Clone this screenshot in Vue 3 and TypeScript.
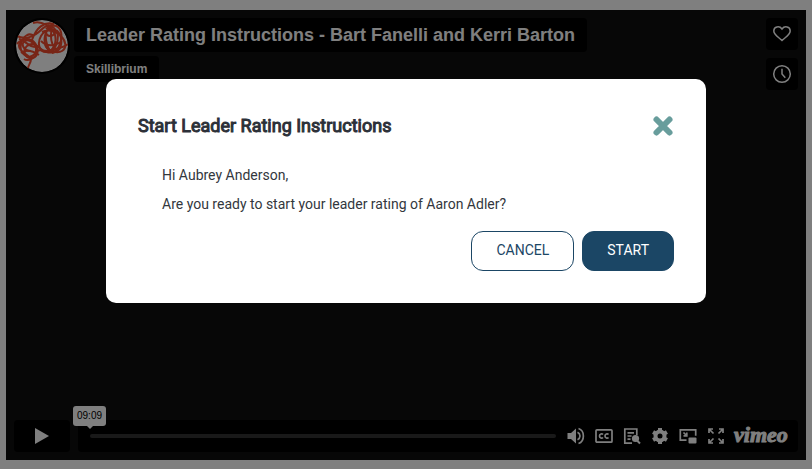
<script setup lang="ts">
import { ref } from 'vue'

const open = ref<boolean>(true)
const playing = ref<boolean>(false)
const position = ref<number>(0)
const title = 'Leader Rating Instructions - Bart Fanelli and Kerri Barton'
const member = 'Aubrey Anderson'
const leader = 'Aaron Adler'
</script>

<template>
  <main class="page">
    <section class="player" aria-label="Video player">
      <header class="top">
        <a class="avatar" href="#" aria-label="Skillibrium profile">
          <svg viewBox="0 0 52 52" width="52" height="52">
            <defs>
              <clipPath id="disc"><circle cx="26" cy="26" r="26" /></clipPath>
            </defs>
            <g clip-path="url(#disc)">
              <circle cx="26" cy="26" r="26" fill="#fff" />
              <g class="scribble">
                <path d="M11 52c0-6 4-8 4-13-3-5-12-7-12-13s8-9 13-5 6 12 0 15-13-4-11-12 8-12 13-8" />
                <path d="M1 24c4-6 14-6 18-1s4 14-3 15-10-8-5-12 10-1 14 3 8 4 14 3" />
                <path d="M17 3c8-3 20 4 22 12s-2 17-9 17-9-9-5-16 14-9 18-3 3 18-4 19-12-8-10-16 8-13 15-9" />
                <path d="M16 20C20 8 28 1 38 4M1 16c8 4 17 1 24-6s18-6 20 2-3 20-9 21M26 12c6-3 14-1 19 4s6 12 1 15-14 0-17-6" />
                <path d="M8 39c4 3 12-1 13-7S14 18 9 21s-1 10 6 10M30 9c4-4 10-2 9 3s-8 5-9 1" />
                <path d="M20 31c7-3 12 3 18-1s9-1 14-6M30 12c-1 8 1 15 5 20M36 8c-2 8-1 16 4 22" />
                <path d="M3 19c6 1 9 8 17 8M5 33c5-4 12-2 18 2M41 10c2 8 1 14-4 20M25 21c6 6 14 5 20 1" />
              </g>
            </g>
          </svg>
        </a>
        <div class="titles">
          <h1><a href="#">{{ title }}</a></h1>
          <a class="owner" href="#">Skillibrium</a>
        </div>
        <div class="actions">
          <button type="button" aria-label="Like">
            <svg viewBox="0 0 20 20" width="20" height="20">
              <path class="line" d="M10 16.500C7 13.500 1.800 10.800 1.800 7c0-4.500 5.700-5.500 8.200-2 2.500-3.500 8.200-2.500 8.200 2 0 3.800-5.200 6.500-8.200 9.500Z" />
            </svg>
          </button>
          <button type="button" aria-label="Watch later">
            <svg viewBox="0 0 20 20" width="20" height="20">
              <circle class="line" cx="10" cy="10" r="8.300" />
              <path class="line" d="M10 4.800V10l3.300 3.800" />
            </svg>
          </button>
        </div>
      </header>

      <footer class="controls">
        <button class="play" type="button" aria-label="Play" @click="playing = !playing">
          <svg viewBox="0 0 16 16" width="16" height="16"><path fill="currentColor" d="M1 0l14 8-14 8Z" /></svg>
        </button>
        <div class="bar">
          <output class="time">09:09</output>
          <input v-model.number="position" type="range" min="0" max="549" aria-label="Seek" />
          <div class="tools">
            <button type="button" aria-label="Volume">
              <svg viewBox="0 0 20 20" width="20" height="20">
                <path fill="currentColor" d="M1.500 7H5l5-4.500v15L5 13H1.500Z" />
                <path class="line" d="M11.500 6.300c3.300 1.700 3.300 5.700 0 7.400M12.500 2.500c6.500 2 6.500 13 0 15" />
              </svg>
            </button>
            <button type="button" aria-label="Captions">
              <svg viewBox="0 0 20 20" width="20" height="20">
                <rect class="line" x="2" y="3.800" width="16" height="12.400" rx="1" />
                <path class="line" d="M9 8.500c-1-1.200-3.500-.8-3.500 1.500s2.500 2.700 3.500 1.500M14.500 8.500c-1-1.200-3.500-.8-3.500 1.500s2.500 2.700 3.500 1.500" />
              </svg>
            </button>
            <button type="button" aria-label="Transcript">
              <svg viewBox="0 0 20 20" width="20" height="20">
                <path class="line" d="M10 17.200H2.800V3h12v6M5.500 6.800h6.500M5.500 10h4M5.500 13.200h3" />
                <circle cx="13.500" cy="12.500" r="3.600" fill="currentColor" />
                <path class="thick" d="M15 14.500l3 3" />
              </svg>
            </button>
            <button type="button" aria-label="Settings">
              <svg viewBox="0 0 20 20" width="20" height="20">
                <circle cx="10" cy="10" r="4.500" fill="none" stroke="currentColor" stroke-width="4" />
                <path class="teeth" d="M10 2v3M10 15v3M3.070 6l2.600 1.500M14.330 12.500l2.600 1.500M3.070 14l2.600-1.500M14.330 7.500l2.600-1.500" />
              </svg>
            </button>
            <button type="button" aria-label="Picture in picture">
              <svg viewBox="0 0 20 20" width="20" height="20">
                <path class="line" d="M8.500 14.200H2.300V3.800h15.400v6M5.500 6.500l3 3M8.800 6.500v3.300H5.500" />
                <rect x="10.500" y="11.500" width="8" height="6" rx="1" fill="currentColor" />
              </svg>
            </button>
            <button type="button" aria-label="Fullscreen">
              <svg viewBox="0 0 20 20" width="20" height="20">
                <path class="line" d="M3 7V3h4M13 3h4v4M17 13v4h-4M7 17H3v-4M3 3l4.500 4.500M17 3l-4.500 4.500M17 17l-4.500-4.500M3 17l4.500-4.500" />
              </svg>
            </button>
            <a class="brand" href="#">vimeo</a>
          </div>
        </div>
      </footer>
    </section>

    <div v-if="open" class="overlay">
      <section class="dialog" role="dialog" aria-modal="true" aria-labelledby="dialog-title">
        <header class="dialog-head">
          <h2 id="dialog-title">Start Leader Rating Instructions</h2>
          <button class="close" type="button" aria-label="Close" @click="open = false">
            <svg viewBox="0 0 22 22" width="22" height="22"><path d="M4.500 4.500l13 13M17.500 4.500l-13 13" /></svg>
          </button>
        </header>
        <div class="dialog-body">
          <p>Hi {{ member }},</p>
          <p>Are you ready to start your leader rating of {{ leader }}?</p>
        </div>
        <footer class="dialog-actions">
          <button class="cancel" type="button" @click="open = false">CANCEL</button>
          <button class="start" type="button" @click="open = false">START</button>
        </footer>
      </section>
    </div>
  </main>
</template>

<style>
body {
  margin: 0;
  background: #fff;
}
</style>

<style scoped>
* {
  box-sizing: border-box;
}
button {
  display: flex;
  align-items: center;
  justify-content: center;
  padding: 0;
  border: 0;
  background: none;
  color: inherit;
  cursor: pointer;
}
a {
  color: inherit;
  text-decoration: none;
}
svg {
  display: block;
}
.page {
  padding: 10px 6px;
}
.player {
  display: flex;
  flex-direction: column;
  justify-content: space-between;
  aspect-ratio: 16 / 9;
  padding: 8px;
  background: #0e0e0e;
  color: #fff;
  font-family: "Liberation Sans", Arial, sans-serif;
}
.top {
  display: flex;
  align-items: flex-start;
}
.avatar {
  margin: 2px 6px 0 2px;
  border-radius: 50%;
  box-shadow: 0 0 0 2px #000;
}
.scribble {
  fill: none;
  stroke: #f04a2c;
  stroke-width: 2;
}
.titles {
  display: flex;
  flex: 1;
  flex-direction: column;
  align-items: flex-start;
  gap: 4px;
}
h1,
.owner {
  margin: 0;
  padding: 0 12px;
  border-radius: 4px;
  background: #000;
  font-weight: 700;
}
h1 {
  font-size: 18px;
  line-height: 34px;
}
.owner {
  font-size: 12px;
  line-height: 26px;
}
.actions {
  display: flex;
  flex-direction: column;
  gap: 8px;
}
.actions button {
  width: 32px;
  height: 32px;
  border-radius: 4px;
  background: #000;
}
.line {
  fill: none;
  stroke: currentColor;
  stroke-width: 1.5;
}
.tools .line {
  stroke-width: 1.7;
}
.thick {
  stroke: currentColor;
  stroke-width: 2;
}
.teeth {
  fill: none;
  stroke: currentColor;
  stroke-width: 4;
}
.controls {
  display: flex;
  gap: 8px;
}
.play {
  width: 56px;
  height: 32px;
  border-radius: 4px;
  background: #000;
}
.bar {
  position: relative;
  display: flex;
  flex: 1;
  align-items: center;
  gap: 10px;
  height: 32px;
  padding: 0 8px 0 12px;
  border-radius: 4px;
  background: #000;
}
.time {
  position: absolute;
  bottom: 26px;
  left: -5px;
  padding: 0 4px;
  border-radius: 3px;
  background: #fff;
  color: #000;
  font-size: 10px;
  line-height: 20px;
}
.time::after {
  position: absolute;
  top: 20px;
  left: 14px;
  border: 3px solid transparent;
  border-top-color: #fff;
  border-bottom: 0;
  content: "";
}
input {
  flex: 1;
  min-width: 0;
  height: 4px;
  margin: 0;
  border-radius: 2px;
  background: #333;
  appearance: none;
}
input::-webkit-slider-thumb {
  width: 1px;
  height: 4px;
  appearance: none;
}
.tools {
  display: flex;
  align-items: center;
  gap: 8px;
}
.brand {
  width: 56px;
  padding-bottom: 2px;
  font-family: "Liberation Serif", serif;
  font-size: 22px;
  font-style: italic;
  font-weight: 700;
  line-height: 22px;
  -webkit-text-stroke: 1px currentColor;
}
.overlay {
  position: fixed;
  inset: 0;
  padding: 79px 16px 16px;
  background: rgba(0, 0, 0, 0.5);
}
.dialog {
  max-width: 600px;
  margin: 0 auto;
  padding: 32px;
  border-radius: 10px;
  background: #fff;
  color: #33373d;
  font-family: Roboto, sans-serif;
}
.dialog-head {
  display: flex;
  align-items: center;
  justify-content: space-between;
}
h2 {
  margin: 0;
  color: #2c3038;
  font-size: 18px;
  font-weight: 400;
  line-height: 30px;
  -webkit-text-stroke: 1px currentColor;
}
.close path {
  fill: none;
  stroke: #689d9c;
  stroke-width: 6;
  stroke-linecap: round;
}
.dialog-body {
  padding: 20px 24px 12px;
  font-size: 14px;
  line-height: 29px;
}
p {
  margin: 0;
}
.dialog-actions {
  display: flex;
  justify-content: flex-end;
  gap: 8px;
}
.dialog-actions button {
  height: 40px;
  padding: 0 24px 2px;
  border: 1px solid #1b4665;
  border-radius: 12px;
  font-family: Roboto, sans-serif;
  font-size: 14px;
}
.cancel {
  color: #1b4665;
}
.start {
  background: #1b4665;
  color: #fff;
}
</style>
